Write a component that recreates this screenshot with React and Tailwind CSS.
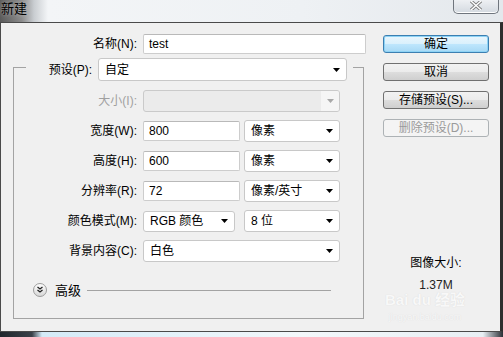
import React from 'react';

const font = "font-['Liberation_Sans','Noto_Sans_CJK_SC',sans-serif]";

const Arrow = ({ muted }) => (
  <svg width="7" height="4" viewBox="0 0 7 4" className="shrink-0">
    <path d="M0 0 L7 0 L3.5 4 Z" fill={muted ? '#a8a8a8' : '#000'} />
  </svg>
);

const Select = ({ className, value, h = 'h-[22px]' }) => (
  <div className={`flex ${h} ${className} items-center justify-between rounded-[3px] border border-[#c8c8c8] bg-white pl-[6px] pr-[6px]`}>
    <span className="leading-none">{value}</span>
    <Arrow />
  </div>
);

const Input = ({ className, value }) => (
  <div className={`flex h-[20px] ${className} items-center rounded-[2px] border border-[#cdcdcd] border-t-[#b9b9b9] bg-white pl-[5px]`}>
    <span className="leading-none">{value}</span>
  </div>
);

const Button = ({ children, primary, disabled }) => {
  let cls = 'border-[#707070] bg-[linear-gradient(to_bottom,#f2f2f2_0%,#ebebeb_50%,#dddddd_51%,#cfcfcf_100%)] text-black';
  if (primary) cls = 'border-[#3c7fb1] bg-[linear-gradient(to_bottom,#eaf6fd_0%,#d9f0fc_50%,#bee6fd_51%,#a7d9f5_100%)] text-black shadow-[inset_0_0_0_1px_#8ed3f5]';
  if (disabled) cls = 'border-[#adb2b5] bg-[#f4f4f4] text-[#9a9a9a]';
  return (
    <div className={`flex h-[18px] w-[106px] items-center justify-center rounded-[3px] border ${cls}`}>
      <span className="leading-none">{children}</span>
    </div>
  );
};

const Row = ({ label, children, muted }) => (
  <div className="flex h-[30px] items-center gap-[6px]">
    <div className={`w-[123px] text-right ${muted ? 'text-[#a0a0a0]' : 'text-black'}`}>{label}</div>
    {children}
  </div>
);

export default function App() {
  return (
    <div className={`relative flex h-[337px] w-[503px] flex-col overflow-hidden bg-[#f0f0f0] text-[12px] text-black ${font}`}>
      {/* title bar */}
      <div className="flex h-[22px] items-start justify-between bg-[linear-gradient(to_right,#5a5a5a_0px,#8c8c8c_22px,#c9cdd1_34px,#f3f5f7_48px,#eef1f4_60%,#e4e8ec_100%)]">
        <div className="pl-[1px] pt-[2px] text-[13px] leading-[14px] text-black [text-shadow:0_0_4px_#c0c0c0]">新建</div>
        <div className="mr-[4px] flex h-[14px] w-[46px] items-start justify-center rounded-b-[5px] border border-t-0 border-[#6f757d] bg-[linear-gradient(to_bottom,#eef0f3,#d3d9e0)] shadow-[inset_0_-1px_0_#ffffff]">
          <svg width="14" height="9" viewBox="0 0 14 9" className="mt-[1px]">
            <path d="M2 0 L12 9 M12 0 L2 9" stroke="#7d7d7d" strokeWidth="3.2" />
            <path d="M2 0 L12 9 M12 0 L2 9" stroke="#ffffff" strokeWidth="1.4" />
          </svg>
        </div>
      </div>

      {/* dialog body */}
      <div className="flex h-[310px] border-t border-l border-b border-r-[3px] border-[#4a4a4a] border-r-[#2e2e2e] bg-[#f0f0f0]">
        {/* left column */}
        <div className="w-[370px] pl-[12px] pt-[11px]">
          <div className="flex h-[20px] items-center gap-[6px]">
            <div className="w-[124px] text-right">名称(N):</div>
            <Input className="w-[223px]" value="test" />
          </div>

          <div className="mt-[13px] h-[252px] w-[351px] border border-[#a3a3a3]">
            <div className="-mt-[10px] ml-[12px] flex h-[23px] w-[327px] items-center gap-[6px] bg-[#f0f0f0] pr-[6px]">
              <div className="w-[66px] text-right">预设(P):</div>
              <Select className="w-[249px]" value="自定" h="h-[23px]" />
            </div>

            <div className="mt-[5px]">
              <Row label="大小(I):" muted>
                <div className="flex h-[22px] w-[197px] overflow-hidden rounded-[3px] border border-[#cacaca] bg-[#ebebeb]">
                  <div className="flex-1" />
                  <div className="flex w-[18px] items-center justify-center bg-[#f5f5f5]">
                    <Arrow muted />
                  </div>
                </div>
              </Row>
              <Row label="宽度(W):">
                <Input className="w-[97px]" value="800" />
                <Select className="-ml-[2px] w-[96px]" value="像素" />
              </Row>
              <Row label="高度(H):">
                <Input className="w-[97px]" value="600" />
                <Select className="-ml-[2px] w-[96px]" value="像素" />
              </Row>
              <Row label="分辨率(R):">
                <Input className="w-[97px]" value="72" />
                <Select className="-ml-[2px] w-[96px]" value="像素/英寸" />
              </Row>
              <Row label="颜色模式(M):">
                <Select className="w-[92px]" value="RGB 颜色" h="h-[21px]" />
                <Select className="ml-[3px] w-[96px]" value="8 位" />
              </Row>
              <Row label="背景内容(C):">
                <Select className="w-[197px]" value="白色" />
              </Row>
            </div>

            <div className="ml-[19px] mr-[32px] mt-[17px] flex h-[14px] items-center">
              <svg width="14" height="14" viewBox="0 0 14 14" className="shrink-0">
                <defs>
                  <linearGradient id="adv" x1="0" y1="0" x2="0" y2="1">
                    <stop offset="0" stopColor="#ffffff" />
                    <stop offset="1" stopColor="#d6d6d6" />
                  </linearGradient>
                </defs>
                <circle cx="7" cy="7" r="6.5" fill="url(#adv)" stroke="#9c9c9c" />
                <path d="M4.5 4 L7 6 L9.5 4 M4.5 7 L7 9 L9.5 7" fill="none" stroke="#222" strokeWidth="1.3" />
              </svg>
              <span className="ml-[8px] text-[13px] leading-none">高级</span>
              <div className="ml-[6px] h-px flex-1 bg-[#a3a3a3]" />
            </div>
          </div>
        </div>

        {/* right column */}
        <div className="flex flex-col pl-[12px] pt-[12px]">
          <div className="flex flex-col gap-[10px]">
            <Button primary>确定</Button>
            <Button>取消</Button>
            <Button>存储预设(S)...</Button>
            <Button disabled>删除预设(D)...</Button>
          </div>
          <div className="mt-[118px] w-[106px] text-center leading-[16px]">图像大小:</div>
          <div className="mt-[6px] w-[106px] text-center leading-[16px] text-[#222]">1.37M</div>
        </div>
      </div>

      {/* bottom glass strip */}
      <div className="h-[5px] bg-[linear-gradient(to_right,#20262c_0px,#3a4149_32px,#d4ebf8_42px,#f3f8fb_60%,#e8eff4_96%,#2a2f35_100%)]" />

      {/* watermark */}
      <div className="pointer-events-none absolute left-[385px] top-[292px] flex flex-col items-center text-[#fafafa] opacity-80 [text-shadow:0_0_1px_#d2d2d2]">
        <div className="text-[15px] font-bold leading-[16px]">Bai du 经验</div>
        <div className="mt-[4px] text-[9px] leading-[10px]">jingyan.baidu.com</div>
      </div>
    </div>
  );
}
